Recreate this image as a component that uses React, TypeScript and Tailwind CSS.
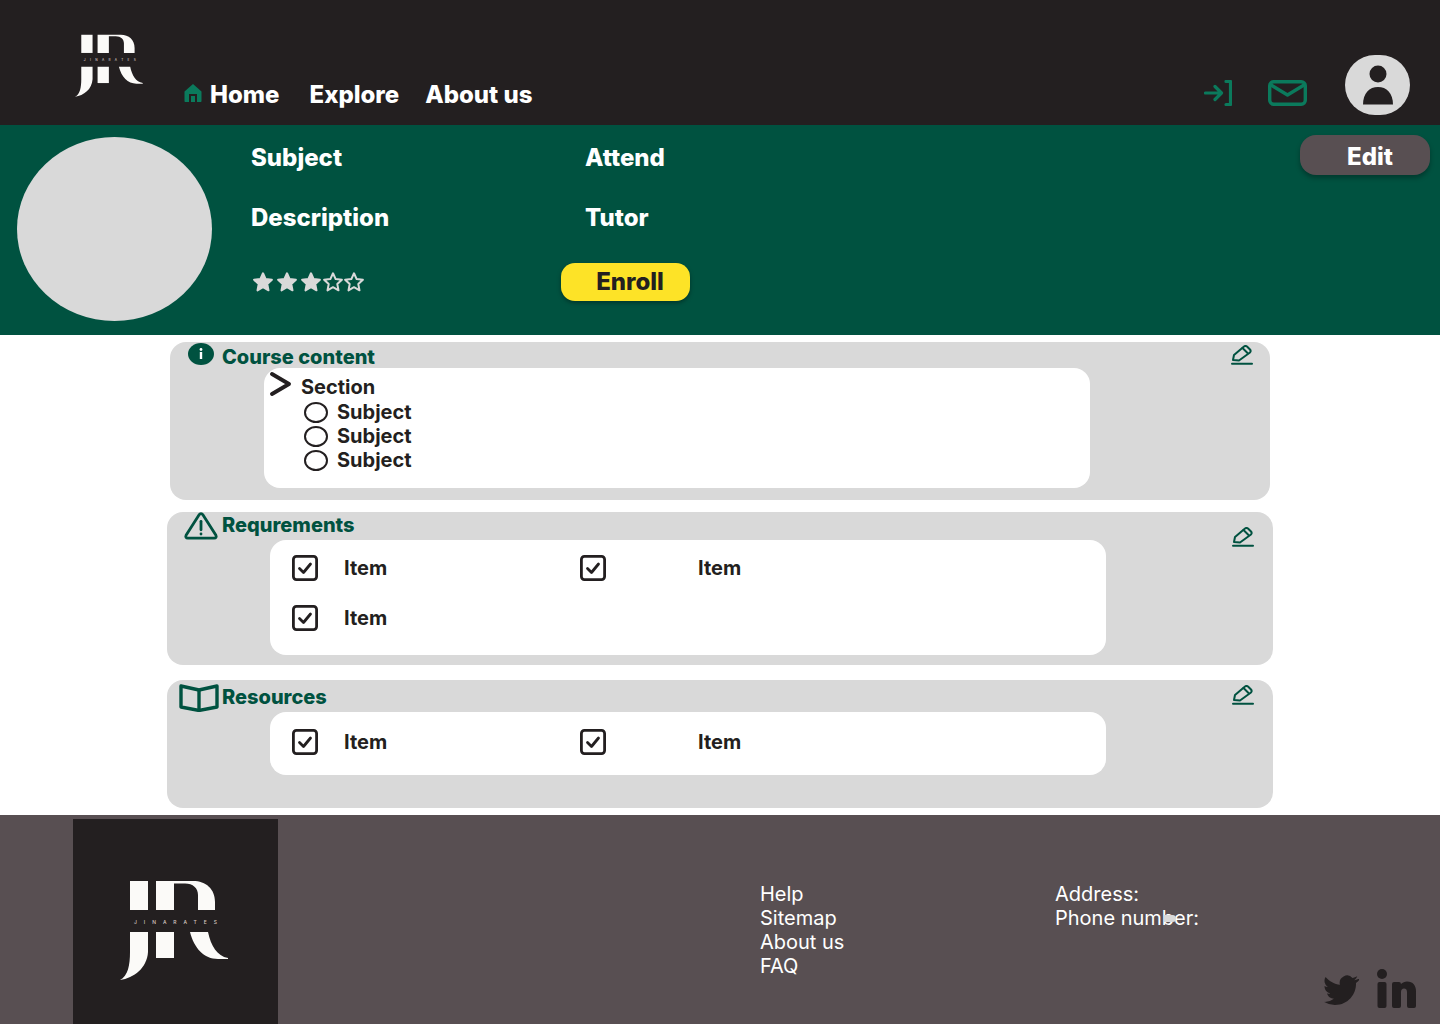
import type { ReactNode } from "react";

const Logo = ({ className }: { className: string }) => (
  <svg viewBox="0 0 110 100" className={className} fill="#fbfaf8">
    {/* top half */}
    <path d="M10 1H28V30H10Z" />
    <path d="M36 1H73C86 1 95 9 95 22V30H78V15C78 8 73 3.500 65 3.500H54V30H36Z" />
    <text x="14" y="43.500" fontSize="5" fontWeight="500" fill="#d8c8c0" textLength="83" fontFamily="Inter, sans-serif">
      JINARATES
    </text>
    {/* bottom half */}
    <path d="M10 52H28V72C27 88 14 98 0 100C8 96 10 85 10 72Z" />
    <path d="M36 52H54V78H36Z" />
    <path d="M70 52H88C91 66 97 76 108 78V79H98C84 79 74 68 70 52Z" />
  </svg>
);

const Star = ({ filled }: { filled: boolean }) => (
  <svg viewBox="0 0 24 24" className="size-[22px]" fill={filled ? "#d9d9d9" : "none"} stroke="#d9d9d9" strokeWidth="2.200" strokeLinejoin="round">
    <path d="M12 2.500l2.900 6.300 6.800.8-5 4.700 1.300 6.800-6-3.400-6 3.400 1.300-6.800-5-4.700 6.800-.8z" />
  </svg>
);

const EditIcon = () => (
  <svg viewBox="0 0 22 20" className="h-[20px] w-[22px]" fill="none" stroke="#005240" strokeWidth="2" strokeLinecap="round" strokeLinejoin="round">
    <path d="M2 15l1-5L13 1.500c1-.7 2-.7 3 0l3 3c.8.900.8 2 0 3L8 15.500z" />
    <path d="M11.500 3l5 5" />
    <path d="M1 18.800h20" />
  </svg>
);

const CheckBox = () => (
  <svg viewBox="0 0 26 26" className="size-[26px] shrink-0" fill="none" stroke="#231f20" strokeLinecap="round" strokeLinejoin="round">
    <rect x="1.400" y="1.400" width="23.200" height="23.200" rx="3" strokeWidth="2.800" />
    <path d="M7.500 13.500l4 4 7-8.500" strokeWidth="2.800" />
  </svg>
);

const Radio = () => <span className="h-[21px] w-[24px] shrink-0 rounded-[50%] border-2 border-[#231f20]" />;

const ItemRow = ({ wide }: { wide?: boolean }) => (
  <div className="flex h-[50px] items-center pl-[22px]">
    <div className="flex w-[288px] items-center gap-[26px]">
      <CheckBox />
      <span className="text-[20px] font-bold text-[#231f20]">Item</span>
    </div>
    {wide && (
      <div className="flex items-center gap-[92px]">
        <CheckBox />
        <span className="text-[20px] font-bold text-[#231f20]">Item</span>
      </div>
    )}
  </div>
);

const CardTitle = ({ icon, title, pad, textClass = "" }: { icon: ReactNode; title: string; pad: string; textClass?: string }) => (
  <div className={`flex h-full items-start ${pad}`}>
    {icon}
    <span className={`text-[20px] leading-[26px] font-extrabold text-[#005240] ${textClass}`}>{title}</span>
  </div>
);

export default function App() {
  return (
    <div className="h-[1024px] w-[1440px] overflow-hidden bg-white font-['Inter',sans-serif]">
      {/* Header */}
      <header className="flex h-[125px] items-start bg-[#231f20]">
        <Logo className="mt-[34px] ml-[75px] h-[63px] w-[69px]" />
        <nav className="mt-[79px] ml-[39px] flex items-center text-[24px] leading-[32px] font-extrabold text-white">
          <svg viewBox="0 0 20 20" className="mb-[4px] size-[20px]" fill="#0b7a5c">
            <path d="M10 1l8.500 7.500V18c0 .6-.4 1-1 1H14V11H6v8H2.500c-.6 0-1-.4-1-1V8.500z" />
            <path d="M8 13h4v6H8z" />
          </svg>
          <a className="ml-[7px]">Home</a>
          <a className="ml-[30px]">Explore</a>
          <a className="ml-[26px]">About us</a>
        </nav>
        <div className="mt-[55px] mr-[30px] ml-auto flex items-start">
          <svg viewBox="0 0 28 26" className="mt-[25px] h-[26px] w-[28px]" fill="none" stroke="#0b7a5c" strokeWidth="3.200" strokeLinecap="round" strokeLinejoin="round">
            <path d="M1.500 13H17M11 6.500l6.500 6.500-6.500 6.500" />
            <path d="M22 1.500h4.500v23H22" />
          </svg>
          <svg viewBox="0 0 39 26" className="mt-[25px] ml-[36px] h-[26px] w-[39px]" fill="none" stroke="#0b7a5c" strokeWidth="3.400" strokeLinejoin="round" strokeLinecap="round">
            <rect x="1.700" y="1.700" width="35.600" height="22.600" rx="4" />
            <path d="M3 5l16.500 10L36 5" />
          </svg>
          <div className="ml-[38px] flex h-[60px] w-[65px] items-center justify-center rounded-full bg-[#d9d9d9]">
            <svg viewBox="0 0 32 40" className="h-[40px] w-[32px]" fill="#231f20">
              <circle cx="16" cy="9" r="8.500" />
              <path d="M1 39.500C1 28 7.500 22 16 22s15 6 15 17.500z" />
            </svg>
          </div>
        </div>
      </header>

      {/* Course summary */}
      <section className="flex h-[210px] items-start bg-[#005240] text-[24px] leading-[32px] font-extrabold text-white">
        <div className="mt-[12px] ml-[17px] h-[184px] w-[195px] rounded-[50%] bg-[#d9d9d9]" />
        <div className="mt-[17px] ml-[39px] flex w-[334px] flex-col">
          <p>Subject</p>
          <p className="mt-[28px]">Description</p>
          <div className="mt-[37px] flex items-center pl-[1px]">
            <Star filled />
            <span className="w-[2px]" />
            <Star filled />
            <span className="w-[2px]" />
            <Star filled />
            <Star filled={false} />
            <span className="-ml-[1px]" />
            <Star filled={false} />
          </div>
        </div>
        <div className="mt-[17px] flex flex-col items-start">
          <p>Attend</p>
          <p className="mt-[28px]">Tutor</p>
          <button className="mt-[29px] -ml-[24px] flex h-[38px] w-[129px] items-center justify-center rounded-[14px] bg-[#fde327] pl-[9px] text-[#231f20] shadow-[0_2px_4px_rgba(0,0,0,0.35)]">
            Enroll
          </button>
        </div>
        <button className="mt-[10px] mr-[10px] ml-auto flex h-[40px] w-[130px] items-center justify-center rounded-[16px] bg-[#584f52] pt-[3px] pl-[10px] shadow-[0_3px_5px_rgba(0,0,0,0.3)]">
          Edit
        </button>
      </section>

      {/* Cards */}
      <main className="h-[480px] pt-[7px]">
        <section className="ml-[170px] h-[158px] w-[1100px] rounded-[16px] bg-[#d9d9d9]">
          <div className="flex h-[26px] items-start justify-between pr-[17px]">
            <div className="h-[26px]">
              <CardTitle
                pad="pl-[18px]"
                textClass="pt-[2px]"
                title="Course content"
                icon={
                  <svg viewBox="0 0 26 24" className="mr-[8px] h-[24px] w-[26px]">
                    <ellipse cx="13" cy="12" rx="13" ry="11" fill="#005240" />
                    <rect x="11.800" y="10" width="2.400" height="7" fill="#fff" />
                    <circle cx="13" cy="7.500" r="1.400" fill="#fff" />
                  </svg>
                }
              />
            </div>
            <span className="mt-[3px]">
              <EditIcon />
            </span>
          </div>
          <div className="ml-[94px] h-[120px] w-[826px] rounded-[16px] bg-white text-[20px] font-bold text-[#231f20]">
            <div className="flex h-[36px] items-center pl-[6px]">
              <svg viewBox="0 0 22 24" className="mb-[4px] h-[24px] w-[22px]" fill="none" stroke="#231f20" strokeWidth="3.800" strokeLinecap="round" strokeLinejoin="round">
                <path d="M2 2l17 10L2 22" />
              </svg>
              <span className="ml-[9px] pt-[1px]">Section</span>
            </div>
            <div className="-mt-[4px]">
              {[0, 1, 2].map((row) => (
                <div key={row} className="flex h-[24px] items-center pl-[40px]">
                  <Radio />
                  <span className="ml-[9px]">Subject</span>
                </div>
              ))}
            </div>
          </div>
        </section>

        <section className="mt-[12px] ml-[167px] h-[153px] w-[1106px] rounded-[16px] bg-[#d9d9d9]">
          <div className="flex h-[28px] items-start justify-between pr-[19px]">
            <CardTitle
              pad=""
              title="Requrements"
              icon={
                <svg viewBox="0 0 36 30" className="mr-[3px] ml-[16px] h-[28px] w-[36px]" fill="none" stroke="#005240" strokeWidth="3" strokeLinecap="round" strokeLinejoin="round">
                  <path d="M16 3L2 25c-.8 1.500 0 3 1.800 3h28.400c1.800 0 2.600-1.500 1.800-3L20 3c-1-1.600-3-1.600-4 0z" />
                  <path d="M18 10v9" />
                  <path d="M18 23.500v.1" />
                </svg>
              }
            />
            <span className="mt-[15px]">
              <EditIcon />
            </span>
          </div>
          <div className="ml-[103px] h-[115px] w-[836px] rounded-[16px] bg-white pt-[3px]">
            <ItemRow wide />
            <ItemRow />
          </div>
        </section>

        <section className="mt-[15px] ml-[167px] h-[128px] w-[1106px] rounded-[16px] bg-[#d9d9d9]">
          <div className="flex h-[32px] items-start justify-between pr-[19px]">
            <div className="pt-[4px]">
              <CardTitle
                pad=""
                title="Resources"
                icon={
                  <svg viewBox="0 0 40 28" className="mr-[3px] ml-[12px] h-[28px] w-[40px]" fill="none" stroke="#005240" strokeWidth="3.400" strokeLinejoin="round">
                    <path d="M20 6L2 2v21l18 3.500L38 23V2z" />
                    <path d="M20 6v20" />
                  </svg>
                }
              />
            </div>
            <span className="mt-[5px]">
              <EditIcon />
            </span>
          </div>
          <div className="ml-[103px] flex h-[63px] w-[836px] items-center rounded-[16px] bg-white pb-[4px]">
            <ItemRow wide />
          </div>
        </section>
      </main>

      {/* Footer */}
      <footer className="flex h-[209px] bg-[#584f52] text-[20px] leading-[24px] text-white">
        <div className="mt-[4px] ml-[73px] flex h-[205px] w-[205px] shrink-0 items-start bg-[#231f20] pt-[61px] pl-[47px]">
          <Logo className="h-[100px] w-[110px]" />
        </div>
        <ul className="ml-[482px] w-[295px] shrink-0 pt-[67px]">
          <li>Help</li>
          <li>Sitemap</li>
          <li>About us</li>
          <li>FAQ</li>
        </ul>
        <div className="pt-[67px]">
          <p>Address:</p>
          <p className="relative">
            Phone number:
            <span className="absolute top-[9px] left-[109px] h-[7px] w-[12px] rounded-r-[4px] bg-[#d9d9d9]" />
          </p>
        </div>
        <div className="ml-auto flex items-end self-end pr-[24px] pb-[16px]">
          <svg viewBox="0 0 24 24" className="h-[36px] w-[36px]" fill="#231f20">
            <path d="M23.500 4.700c-.9.400-1.800.600-2.800.800 1-.6 1.700-1.500 2.100-2.700-.9.600-2 1-3.100 1.200a4.900 4.900 0 0 0-8.400 4.500C7.800 8.300 4.200 6.300 1.700 3.400a4.900 4.900 0 0 0 1.500 6.600c-.8 0-1.500-.2-2.200-.6v.1c0 2.400 1.700 4.400 3.900 4.800-.7.200-1.500.2-2.200.1.600 2 2.400 3.400 4.600 3.400A9.900 9.900 0 0 1 .5 19.900 14 14 0 0 0 8 22c9 0 14-7.500 14-14v-.6c1-.7 1.800-1.600 2.500-2.700z" />
          </svg>
          <svg viewBox="0 0 39 39" className="ml-[18px] h-[39px] w-[39px]" fill="#231f20">
            <circle cx="5" cy="5" r="5" />
            <rect x="0.500" y="13" width="9" height="26" rx="2" />
            <path d="M15 15a2 2 0 0 1 2-2h5a2 2 0 0 1 2 2c1.500-1.500 4-2.500 6-2.500 6 0 9 4 9 10V37a2 2 0 0 1-2 2h-5a2 2 0 0 1-2-2V23c0-2.500-1.200-3.500-3-3.500S24 21 24 23v14a2 2 0 0 1-2 2h-5a2 2 0 0 1-2-2z" />
          </svg>
        </div>
      </footer>
    </div>
  );
}
